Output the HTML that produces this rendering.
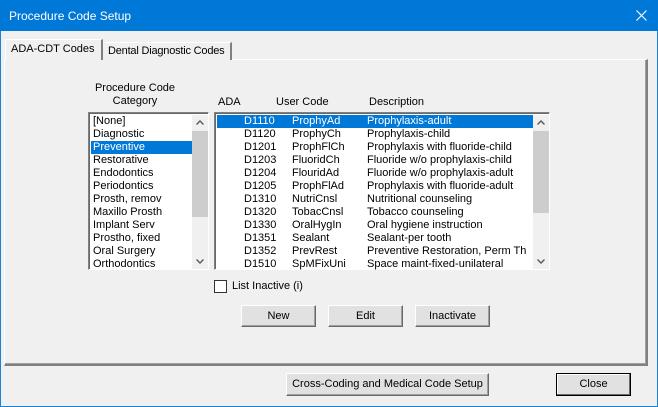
<!DOCTYPE html><html><head><style>
*{margin:0;padding:0;box-sizing:border-box}
body{width:658px;height:407px;background:#f0f0f0;font:11px "Liberation Sans",sans-serif;color:#000;position:relative;overflow:hidden}
.a{position:absolute}
.win{left:0;top:0;width:658px;height:407px;border:1px solid #1883d7;border-top:none}
.title{left:0;top:0;width:658px;height:31px;background:#0078d7;color:#fff;font-size:12px;padding:9px 0 0 9px}
.panel{left:4px;top:59px;width:644px;height:307px;border-top:1px solid #fff;border-left:1px solid #fff;border-right:2px solid #808080;border-bottom:2px solid #808080;box-shadow:inset -1px -1px #a0a0a0}
.tab{border:1px solid #fff;border-right:2px solid #808080;border-bottom:none;background:#f0f0f0;padding-left:5px;white-space:nowrap;overflow:hidden}
.list{background:#fff;border-top:1px solid #808080;border-left:1px solid #808080;border-right:1px solid #fff;border-bottom:1px solid #fff;box-shadow:inset 1px 1px #696969}
.row{height:13px;line-height:13px;white-space:nowrap;position:relative}
.sel{background:#0078d7;color:#fff}
.sb{background:#f0f0f0;width:16px}
.thumb{background:#cdcdcd;left:0;width:16px}
.btn{background:#e1e1e1;border:1px solid #fff;border-right:1px solid #696969;border-bottom:1px solid #696969;box-shadow:inset -1px -1px #a0a0a0;text-align:center;line-height:20px;white-space:nowrap}
.r span{position:absolute;top:0}
</style></head><body>
<div class="a win"></div>
<div class="a title">Procedure Code Setup</div>
<svg class="a" style="left:636px;top:10px" width="11" height="11"><path d="M0.5 0.5L10.5 10.5M10.5 0.5L0.5 10.5" stroke="#fff" stroke-width="1.2"/></svg>
<div class="a panel"></div>
<div class="a tab" style="left:102px;top:42px;width:130px;height:18px;line-height:17px;font-size:11px;letter-spacing:-0.2px">Dental Diagnostic Codes</div>
<div class="a tab" style="left:5px;top:39px;width:98px;height:21px;line-height:19px;z-index:2">ADA-CDT Codes</div>
<div class="a" style="left:75px;top:82px;width:120px;text-align:center;line-height:13px">Procedure Code<br>Category</div>
<div class="a" style="left:218px;top:96px">ADA</div>
<div class="a" style="left:276px;top:96px">User Code</div>
<div class="a" style="left:369px;top:96px">Description</div>
<div class="a list" style="left:88px;top:112px;width:121px;height:158px;padding:2px 0 0 2px">
<div style="width:102px">
<div class="row" style="padding-left:2px">[None]</div>
<div class="row" style="padding-left:2px">Diagnostic</div>
<div class="row sel" style="padding-left:2px">Preventive</div>
<div class="row" style="padding-left:2px">Restorative</div>
<div class="row" style="padding-left:2px">Endodontics</div>
<div class="row" style="padding-left:2px">Periodontics</div>
<div class="row" style="padding-left:2px">Prosth, remov</div>
<div class="row" style="padding-left:2px">Maxillo Prosth</div>
<div class="row" style="padding-left:2px">Implant Serv</div>
<div class="row" style="padding-left:2px">Prostho, fixed</div>
<div class="row" style="padding-left:2px">Oral Surgery</div>
<div class="row" style="padding-left:2px">Orthodontics</div>
</div>
<div class="a sb" style="left:103px;top:2px;height:154px"><div class="a thumb" style="top:16px;height:86px"></div>
<svg class="a" style="left:4px;top:5px" width="8" height="5"><path d="M0.5 4.5L4 1L7.5 4.5" stroke="#606060" stroke-width="1.5" fill="none"/></svg>
<svg class="a" style="left:4px;top:144px" width="8" height="5"><path d="M0.5 0.5L4 4L7.5 0.5" stroke="#606060" stroke-width="1.5" fill="none"/></svg></div>
</div>
<div class="a list r" style="left:214px;top:112px;width:336px;height:158px;padding:2px 0 0 2px">
<div style="width:316px">
<div class="row sel"><span style="left:27px">D1110</span><span style="left:75px">ProphyAd</span><span style="left:150px">Prophylaxis-adult</span></div>
<div class="row"><span style="left:27px">D1120</span><span style="left:75px">ProphyCh</span><span style="left:150px">Prophylaxis-child</span></div>
<div class="row"><span style="left:27px">D1201</span><span style="left:75px">ProphFlCh</span><span style="left:150px">Prophylaxis with fluoride-child</span></div>
<div class="row"><span style="left:27px">D1203</span><span style="left:75px">FluoridCh</span><span style="left:150px">Fluoride w/o prophylaxis-child</span></div>
<div class="row"><span style="left:27px">D1204</span><span style="left:75px">FlouridAd</span><span style="left:150px">Fluoride w/o prophylaxis-adult</span></div>
<div class="row"><span style="left:27px">D1205</span><span style="left:75px">ProphFlAd</span><span style="left:150px">Prophylaxis with fluoride-adult</span></div>
<div class="row"><span style="left:27px">D1310</span><span style="left:75px">NutriCnsl</span><span style="left:150px">Nutritional counseling</span></div>
<div class="row"><span style="left:27px">D1320</span><span style="left:75px">TobacCnsl</span><span style="left:150px">Tobacco counseling</span></div>
<div class="row"><span style="left:27px">D1330</span><span style="left:75px">OralHygIn</span><span style="left:150px">Oral hygiene instruction</span></div>
<div class="row"><span style="left:27px">D1351</span><span style="left:75px">Sealant</span><span style="left:150px">Sealant-per tooth</span></div>
<div class="row"><span style="left:27px">D1352</span><span style="left:75px">PrevRest</span><span style="left:150px">Preventive Restoration, Perm Th</span></div>
<div class="row"><span style="left:27px">D1510</span><span style="left:75px">SpMFixUni</span><span style="left:150px">Space maint-fixed-unilateral</span></div>
</div>
<div class="a sb" style="left:318px;top:2px;height:154px"><div class="a thumb" style="top:16px;height:82px"></div>
<svg class="a" style="left:4px;top:5px" width="8" height="5"><path d="M0.5 4.5L4 1L7.5 4.5" stroke="#606060" stroke-width="1.5" fill="none"/></svg>
<svg class="a" style="left:4px;top:144px" width="8" height="5"><path d="M0.5 0.5L4 4L7.5 0.5" stroke="#606060" stroke-width="1.5" fill="none"/></svg></div>
</div>
<div class="a" style="left:214px;top:280px;width:13px;height:13px;background:#fff;border:1px solid #333"></div>
<div class="a" style="left:232px;top:280px">List Inactive (i)</div>
<div class="a btn" style="left:241px;top:305px;width:75px;height:22px">New</div>
<div class="a btn" style="left:328px;top:305px;width:75px;height:22px">Edit</div>
<div class="a btn" style="left:415px;top:305px;width:75px;height:22px">Inactivate</div>
<div class="a btn" style="left:286px;top:373px;width:203px;height:23px">Cross-Coding and Medical Code Setup</div>
<div class="a btn" style="left:556px;top:373px;width:75px;height:23px;border:1px solid #000;box-shadow:inset -1px -1px #696969,inset 1px 1px #fff">Close</div>
</body></html>
